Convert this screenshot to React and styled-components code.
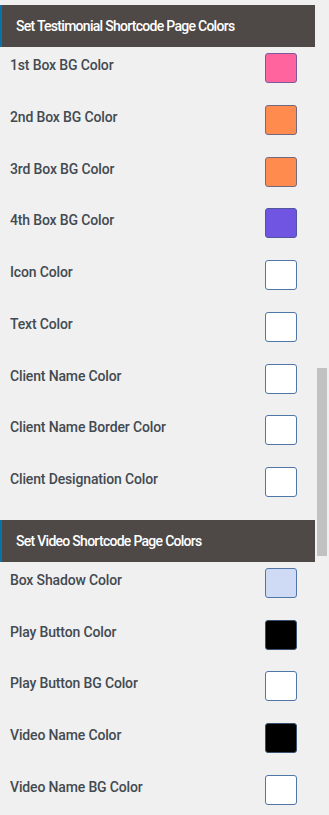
import React from 'react';
import styled, { createGlobalStyle } from 'styled-components';

const GlobalStyle = createGlobalStyle`
  html, body {
    margin: 0;
    padding: 0;
    background: #f0f0f0;
    font-family: Roboto, "Liberation Sans", Arial, sans-serif;
  }
`

const Page = styled.main`
  position: relative;
  width: 329px;
  height: 815px;
  overflow: hidden;
  padding-top: 5px;
  box-sizing: border-box;
`
const Section = styled.section`
  width: 315px;
  & + & {
    margin-top: 7px;
  }
`
const Header = styled.h2`
  margin: 0;
  height: 42px;
  display: flex;
  align-items: center;
  padding-left: 14px;
  background: #4e4946;
  border-left: 2px solid #0a73aa;
  box-sizing: border-box;
  color: #ffffff;
  font-size: 14px;
  font-weight: 500;
  letter-spacing: -0.72px;
`
const Row = styled.div`
  height: 51.75px;
  display: flex;
  align-items: flex-start;
  justify-content: space-between;
  padding: 6px 18px 0 10px;
  box-sizing: border-box;
`
const Label = styled.span`
  margin-top: 1px;
  line-height: 22px;
  font-size: 14px;
  font-weight: 500;
  color: #434a50;
  letter-spacing: -0.15px;
`
const Swatch = styled.span`
  width: 32px;
  height: 30px;
  box-sizing: border-box;
  border-radius: 3px;
  border: 1px solid ${p => p.$border || '#4f76a8'};
  background: ${p => p.$color};
`
const ScrollThumb = styled.div`
  position: absolute;
  left: 317px;
  top: 368px;
  width: 10px;
  height: 188px;
  background: #c1c1c1;
`

const testimonial = [
  ['1st Box BG Color', '#ff649f', '#7a5a9a'],
  ['2nd Box BG Color', '#ff8c4e', '#6f6a80'],
  ['3rd Box BG Color', '#ff8c4e', '#6f6a80'],
  ['4th Box BG Color', '#6f55e2', '#4e56a0'],
  ['Icon Color', '#ffffff'],
  ['Text Color', '#ffffff'],
  ['Client Name Color', '#ffffff'],
  ['Client Name Border Color', '#ffffff'],
  ['Client Designation Color', '#ffffff'],
]

const video = [
  ['Box Shadow Color', '#cfdaf4'],
  ['Play Button Color', '#000000', '#3a5070'],
  ['Play Button BG Color', '#ffffff'],
  ['Video Name Color', '#000000', '#3a5070'],
  ['Video Name BG Color', '#ffffff'],
]

function ColorSection({ title, items }) {
  return (
    <Section>
      <Header>{title}</Header>
      {items.map(([label, color, border]) => (
        <Row key={label}>
          <Label>{label}</Label>
          <Swatch $color={color} $border={border} />
        </Row>
      ))}
    </Section>
  )
}

function App() {
  return (
    <Page>
      <GlobalStyle />
      <ColorSection title="Set Testimonial Shortcode Page Colors" items={testimonial} />
      <ColorSection title="Set Video Shortcode Page Colors" items={video} />
      <ScrollThumb />
    </Page>
  );
}

export default App;
